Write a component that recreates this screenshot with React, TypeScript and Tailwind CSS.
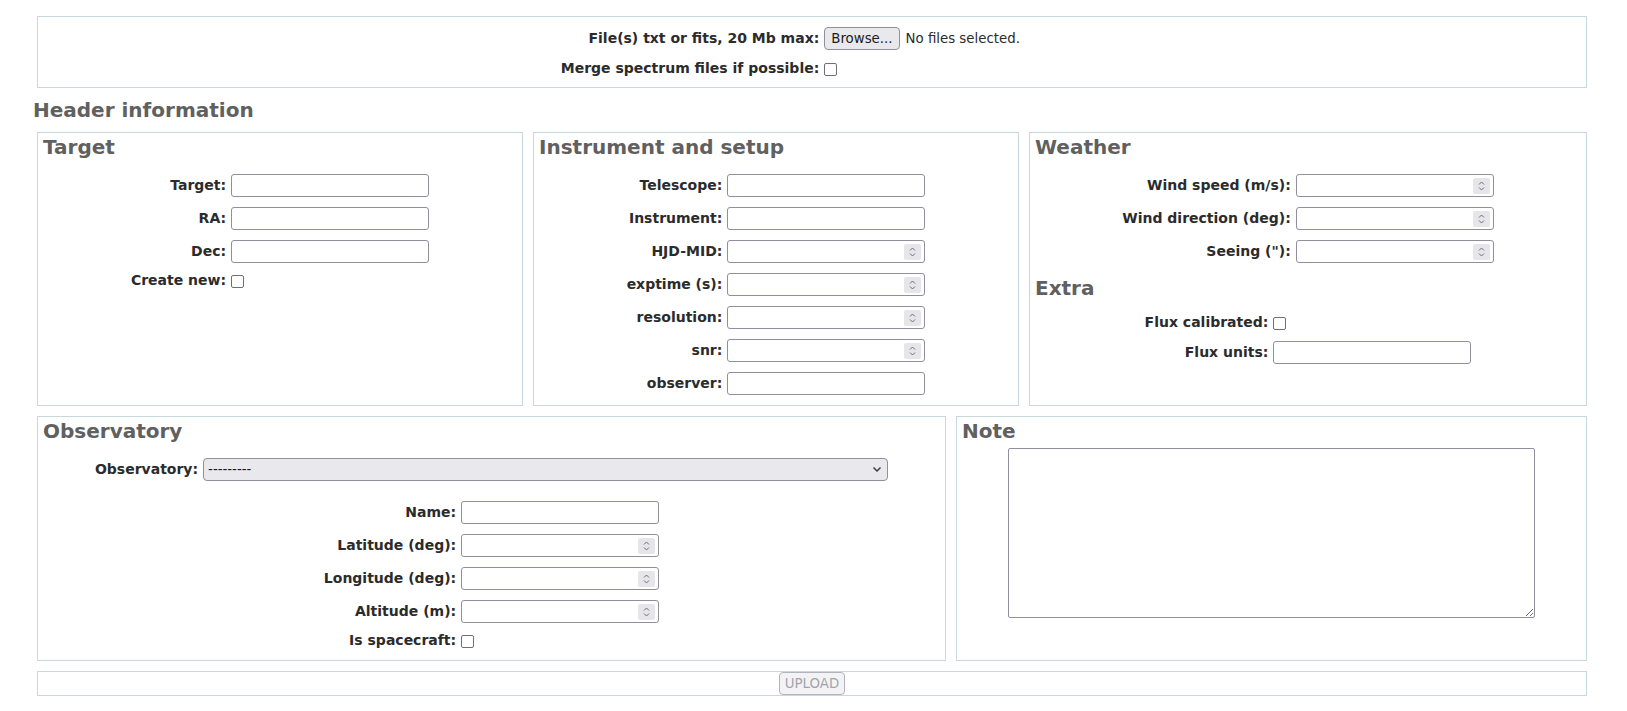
import React from 'react';

type Field = { label: string; kind: 'text' | 'number' | 'check' };

const panel = 'border border-[#c9d7df] bg-white';
const heading = 'text-[20px] leading-[24px] font-bold text-[#606060]';
const labelCls = 'mt-[-2px] text-[14px] leading-[16px] font-bold text-[#2b2b2b] text-right whitespace-nowrap';
const grid = 'grid grid-cols-[auto_auto] justify-center items-center gap-x-[5px] gap-y-[10px]';

const Spinner: React.FC = () => (
  <div className="mr-[3px] flex h-[16px] w-[17px] items-center justify-center rounded-[2px] bg-[#e6e6ea]">
    <svg width="17" height="16" viewBox="0 0 17 16" fill="none" stroke="#6c6c74" strokeWidth="1">
      <path d="M6 6.5 L8.5 4 L11 6.5" />
      <path d="M6 9.5 L8.5 12 L11 9.5" />
    </svg>
  </div>
);

const Checkbox: React.FC = () => (
  <div className="flex h-[16px] items-center">
    <input
      type="checkbox"
      className="m-0 h-[13px] w-[13px] appearance-none rounded-[2px] border border-[#6f6f7a] bg-white"
    />
  </div>
);

const Control: React.FC<{ kind: Field['kind'] }> = ({ kind }) => {
  if (kind === 'check') return <Checkbox />;
  if (kind === 'number') {
    return (
      <div className="flex h-[23px] w-[198px] items-center rounded-[3px] border border-[#8f8f9d] bg-white">
        <input
          type="text"
          className="h-full min-w-0 flex-1 bg-transparent px-1 text-[13.33px] outline-none"
        />
        <Spinner />
      </div>
    );
  }
  return (
    <input
      type="text"
      className="block h-[23px] w-[198px] rounded-[3px] border border-[#8f8f9d] bg-white px-1 text-[13.33px] outline-none"
    />
  );
};

const FieldGrid: React.FC<{ fields: Field[]; className?: string }> = ({ fields, className = '' }) => (
  <div className={`${grid} ${className}`}>
    {fields.map((f) => (
      <React.Fragment key={f.label}>
        <label className={labelCls}>{f.label}</label>
        <Control kind={f.kind} />
      </React.Fragment>
    ))}
  </div>
);

const targetFields: Field[] = [
  { label: 'Target:', kind: 'text' },
  { label: 'RA:', kind: 'text' },
  { label: 'Dec:', kind: 'text' },
  { label: 'Create new:', kind: 'check' },
];

const instrumentFields: Field[] = [
  { label: 'Telescope:', kind: 'text' },
  { label: 'Instrument:', kind: 'text' },
  { label: 'HJD-MID:', kind: 'number' },
  { label: 'exptime (s):', kind: 'number' },
  { label: 'resolution:', kind: 'number' },
  { label: 'snr:', kind: 'number' },
  { label: 'observer:', kind: 'text' },
];

const weatherFields: Field[] = [
  { label: 'Wind speed (m/s):', kind: 'number' },
  { label: 'Wind direction (deg):', kind: 'number' },
  { label: 'Seeing ("):', kind: 'number' },
];

const extraFields: Field[] = [
  { label: 'Flux calibrated:', kind: 'check' },
  { label: 'Flux units:', kind: 'text' },
];

const observatoryFields: Field[] = [
  { label: 'Name:', kind: 'text' },
  { label: 'Latitude (deg):', kind: 'number' },
  { label: 'Longitude (deg):', kind: 'number' },
  { label: 'Altitude (m):', kind: 'number' },
  { label: 'Is spacecraft:', kind: 'check' },
];

export default function App() {
  return (
    <div className="min-h-screen bg-white pt-[16px] font-['DejaVu_Sans',sans-serif] text-[#2b2b2b]">
      <div className="ml-[37px] w-[1550px]">
        {/* file upload */}
        <div className={`${panel} pt-[10px] pb-[10px]`}>
          <div className="grid grid-cols-[auto_239px] justify-center items-center gap-x-[5px] gap-y-[11px]">
            <label className={labelCls}>File(s) txt or fits, 20 Mb max:</label>
            <div className="flex items-center">
              <button className="h-[23px] rounded-[4px] border border-[#8f8f9d] bg-[#e9e9ed] px-[6px] text-[13.33px] text-[#1b1b1b]">
                Browse...
              </button>
              <span className="ml-[6px] text-[13.33px] text-[#2b2b2b]">No files selected.</span>
            </div>
            <label className={labelCls}>Merge spectrum files if possible:</label>
            <Checkbox />
          </div>
        </div>

        <h2 className={`${heading} ml-[-4px] mt-[10px] mb-[10px]`}>Header information</h2>

        <div className="flex gap-[10px]">
          <section className={`${panel} w-[486px] px-[5px] pt-[2px]`}>
            <h3 className={heading}>Target</h3>
            <FieldGrid fields={targetFields} className="mt-[15px]" />
          </section>
          <section className={`${panel} w-[486px] px-[5px] pt-[2px] pb-[10px]`}>
            <h3 className={heading}>Instrument and setup</h3>
            <FieldGrid fields={instrumentFields} className="mt-[15px]" />
          </section>
          <section className={`${panel} flex-1 px-[5px] pt-[2px]`}>
            <h3 className={heading}>Weather</h3>
            <FieldGrid fields={weatherFields} className="mt-[15px]" />
            <h3 className={`${heading} mt-[13px]`}>Extra</h3>
            <FieldGrid fields={extraFields} className="mt-[15px]" />
          </section>
        </div>

        <div className="mt-[10px] flex gap-[10px]">
          <section className={`${panel} w-[909px] px-[5px] pt-[2px] pb-[11px]`}>
            <h3 className={heading}>Observatory</h3>
            <div className={`${grid} mt-[15px]`}>
              <label className={labelCls}>Observatory:</label>
              <div className="relative w-[685px]">
                <select className="block h-[23px] w-full appearance-none rounded-[4px] border border-[#8f8f9d] bg-[#e9e9ed] pl-[4px] text-[13.33px] text-[#1b1b1b] outline-none">
                  <option>---------</option>
                </select>
                <svg
                  className="pointer-events-none absolute right-[6px] top-[8px]"
                  width="10"
                  height="7"
                  viewBox="0 0 10 7"
                  fill="none"
                  stroke="#333"
                  strokeWidth="1.4"
                >
                  <path d="M1.5 1.5 L5 5 L8.5 1.5" />
                </svg>
              </div>
            </div>
            <FieldGrid fields={observatoryFields} className="mt-[20px]" />
          </section>
          <section className={`${panel} flex-1 px-[5px] pt-[2px]`}>
            <h3 className={heading}>Note</h3>
            <textarea className="mx-auto mt-[5px] block h-[170px] w-[527px] rounded-[2px] border border-[#8f8f9d] bg-white p-1 text-[13.33px] outline-none" />
          </section>
        </div>

        <div className={`${panel} mt-[10px] flex justify-center`}>
          <button
            disabled
            className="h-[23px] w-[66px] rounded-[4px] border border-[#b3b3bd] bg-[#f3f3f5] text-[13.33px] text-[#a3a3ab]"
          >
            UPLOAD
          </button>
        </div>
      </div>
    </div>
  );
}
